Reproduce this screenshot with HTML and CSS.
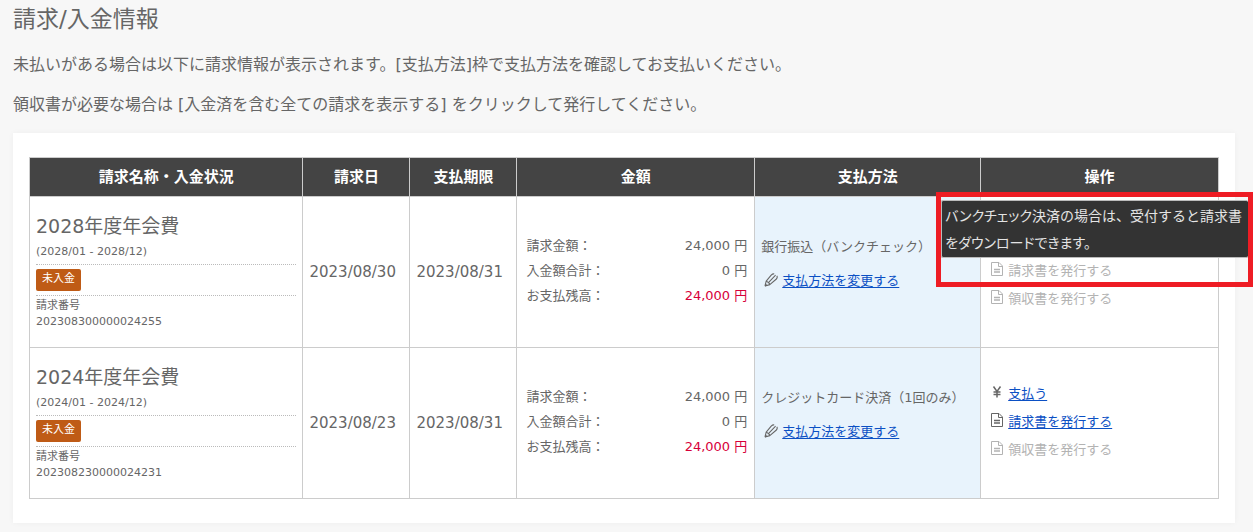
FILE: index.html
```html
<!DOCTYPE html>
<html lang="ja">
<head>
<meta charset="utf-8">
<title>請求/入金情報</title>
<link rel="stylesheet" href="styles.css">
</head>
<body>
<svg class="sprite" aria-hidden="true">
  <symbol id="icon-pencil" viewBox="0 0 14 14">
    <path d="M1 13 2.2 8.2 7.2 2.2Q8.8.6 10.2 1 M1 13 5.8 11.6 12.4 6Q13.8 4 12.8 2.8 M4.2 9.8 11.6 2.2 M2.2 8.2Q4 8.4 4.2 9.8 5.8 10 5.8 11.6" fill="none" stroke="currentColor" stroke-width="1.1" stroke-linejoin="round"/>
    <path d="M.8 13.4 1.6 10.6 3.6 12.5Z" fill="currentColor"/>
  </symbol>
  <symbol id="icon-doc" viewBox="0 0 14 14">
    <path d="M1.5.5H9L12.5 4V13.5H1.5Z M8.5.5V4.5H12.5" fill="none" stroke="currentColor"/>
    <path d="M4 7.5H10 M4 10H10" stroke="currentColor" stroke-width="1.4"/>
  </symbol>
  <symbol id="icon-yen" viewBox="0 0 14 14">
    <path d="M3.5 1.5 7 6.5 10.5 1.5 M7 6.5V12.5 M3.5 7H10.5 M3.5 9.5H10.5" fill="none" stroke="currentColor" stroke-width="1.5"/>
  </symbol>
</svg>
<main class="page">
  <h1 class="page-title">請求/入金情報</h1>
  <p class="lead">未払いがある場合は以下に請求情報が表示されます。[支払方法]枠で支払方法を確認してお支払いください。</p>
  <p class="lead">領収書が必要な場合は [入金済を含む全ての請求を表示する] をクリックして発行してください。</p>
  <section class="card">
    <table class="bills">
      <colgroup>
        <col class="col-name"><col class="col-date"><col class="col-date"><col class="col-amount"><col class="col-method"><col class="col-action">
      </colgroup>
      <thead>
        <tr><th scope="col">請求名称・入金状況</th><th scope="col">請求日</th><th scope="col">支払期限</th><th scope="col">金額</th><th scope="col">支払方法</th><th scope="col">操作</th></tr>
      </thead>
      <tbody>
        <tr>
          <td>
            <div class="bill-name">2028年度年会費</div>
            <div class="period">(2028/01 - 2028/12)</div>
            <div class="status"><span class="badge">未入金</span></div>
            <div class="number">請求番号<br>202308300000024255</div>
          </td>
          <td class="date">2023/08/30</td>
          <td class="date">2023/08/31</td>
          <td>
            <dl class="amounts">
              <div><dt>請求金額：</dt><dd>24,000 円</dd></div>
              <div><dt>入金額合計：</dt><dd>0 円</dd></div>
              <div><dt>お支払残高：</dt><dd class="due">24,000 円</dd></div>
            </dl>
          </td>
          <td class="method">
            <p class="method-name">銀行振込（バンクチェック）</p>
            <p class="entry"><svg class="icon"><use href="#icon-pencil"/></svg><a href="#">支払方法を変更する</a></p>
          </td>
          <td class="action-cell">
            <ul class="actions">
              <li class="entry"><div class="callout"><div class="tooltip" role="tooltip"><span class="kana">バンクチェック</span>決済の場合は、受付すると請求書<span class="kana">をダウンロードできます。</span></div></div></li>
              <li class="entry disabled"><svg class="icon"><use href="#icon-doc"/></svg><span>請求書を発行する</span></li>
              <li class="entry disabled"><svg class="icon"><use href="#icon-doc"/></svg><span>領収書を発行する</span></li>
            </ul>
          </td>
        </tr>
        <tr>
          <td>
            <div class="bill-name">2024年度年会費</div>
            <div class="period">(2024/01 - 2024/12)</div>
            <div class="status"><span class="badge">未入金</span></div>
            <div class="number">請求番号<br>202308230000024231</div>
          </td>
          <td class="date">2023/08/23</td>
          <td class="date">2023/08/31</td>
          <td>
            <dl class="amounts">
              <div><dt>請求金額：</dt><dd>24,000 円</dd></div>
              <div><dt>入金額合計：</dt><dd>0 円</dd></div>
              <div><dt>お支払残高：</dt><dd class="due">24,000 円</dd></div>
            </dl>
          </td>
          <td class="method">
            <p class="method-name">クレジットカード決済（1回のみ）</p>
            <p class="entry"><svg class="icon"><use href="#icon-pencil"/></svg><a href="#">支払方法を変更する</a></p>
          </td>
          <td class="action-cell">
            <ul class="actions">
              <li class="entry"><svg class="icon"><use href="#icon-yen"/></svg><a href="#">支払う</a></li>
              <li class="entry"><svg class="icon"><use href="#icon-doc"/></svg><a href="#">請求書を発行する</a></li>
              <li class="entry disabled"><svg class="icon"><use href="#icon-doc"/></svg><span>領収書を発行する</span></li>
            </ul>
          </td>
        </tr>
      </tbody>
    </table>
  </section>
</main>
</body>
</html>
```
FILE: styles.css
```css
* { box-sizing: border-box; }
body {
  margin: 0;
  background: #f7f7f7;
  color: #666;
  font-family: "DejaVu Sans", "Noto Sans CJK JP", sans-serif;
  font-size: 13px;
  overflow-x: hidden;
}
.sprite { display: none; }
.page { padding: 5px 18px 8px 13px; }
h1, p, dl, dd, ul { margin: 0; padding: 0; }
.page-title { font-size: 23px; font-weight: 400; line-height: 28px; margin-bottom: 20px; }
.lead { font-size: 16px; line-height: 24px; margin-bottom: 16px; }
.card {
  background: #fff;
  padding: 24px 16px;
  box-shadow: 0 0 6px rgba(0, 0, 0, 0.04);
}
.bills { width: 100%; table-layout: fixed; border-collapse: collapse; }
.col-name { width: 23%; }
.col-date { width: 9%; }
.col-amount { width: 20%; }
.col-method { width: 19%; }
.col-action { width: 20%; }
.bills th, .bills td { border: 1px solid #ccc; }
.bills th {
  height: 39px;
  padding: 0 0 4px;
  background: #444;
  color: #fff;
  font-size: 15px;
  font-weight: 700;
}
.bills td { height: 151px; padding: 0 6px; vertical-align: middle; }
.bill-name { font-size: 19px; line-height: 28px; }
.period { font-size: 11px; line-height: 20px; padding: 2px 0; }
.status { display: flex; padding: 4px 0; border: 1px dotted #bbb; border-width: 1px 0; }
.badge {
  padding: 0 6px 2px;
  border-radius: 2px;
  background: #bf5b16;
  color: #fff;
  font-size: 11px;
  line-height: 20px;
}
.number { font-size: 11px; line-height: 16px; padding: 2px 0; }
.bills .date { font-size: 15px; white-space: nowrap; }
.amounts { padding: 0 1px 4px 3px; line-height: 25px; }
.amounts div { display: flex; justify-content: space-between; }
.due { color: #d7003a; }
.bills .method { background: #e8f3fc; padding-bottom: 16px; }
.method-name { line-height: 24px; margin-bottom: 7px; white-space: nowrap; }
.entry { display: flex; align-items: center; gap: 4px; height: 28px; white-space: nowrap; }
.method .entry { padding-left: 3px; }
.entry a { color: #0b50c4; text-decoration: underline; text-underline-offset: 2px; }
.icon { width: 14px; height: 14px; flex: none; }
.bills .action-cell { position: relative; padding: 0 9px 6px; }
.actions { list-style: none; }
.disabled { color: #b3b3b3; }
.callout {
  position: absolute;
  top: -5px;
  left: -45px;
  width: 317px;
  height: 95px;
  border: 5px solid #ee1c24;
  padding-top: 3px;
}
.tooltip {
  padding: 1px 0 1px 3px;
  border: 1px solid #bbb;
  border-right: 0;
  border-radius: 2px;
  background: #333;
  color: #e4e4e4;
  font-family: "Noto Sans CJK JP", sans-serif;
  font-size: 14px;
  line-height: 27px;
  white-space: normal;
}
.kana { font-feature-settings: "palt"; }
```
